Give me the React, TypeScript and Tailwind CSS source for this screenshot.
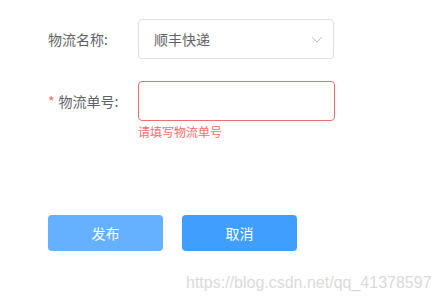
export default function App() {
  return (
    <div
      className="w-[438px] h-[302px] bg-white relative overflow-hidden"
      style={{ fontFamily: '"Noto Sans CJK SC", "Liberation Sans", sans-serif' }}
    >
      <div className="pl-[48px] pt-[19px]">
        {/* 物流名称 */}
        <div className="flex items-center h-[40px]">
          <label className="w-[90px] text-[14px] text-[#606266]">物流名称:</label>
          <div className="w-[196px] h-[40px] border border-[#dcdfe6] rounded-[4px] flex items-center justify-between pl-[15px] pr-[10px]">
            <span className="text-[14px] text-[#606266]">顺丰快递</span>
            <svg width="12" height="7" viewBox="0 0 12 7" fill="none">
              <path d="M1 1l5 5 5-5" stroke="#c0c4cc" strokeWidth="1" />
            </svg>
          </div>
        </div>

        {/* 物流单号 */}
        <div className="flex items-start mt-[22px]">
          <label className="w-[90px] h-[40px] flex items-center text-[14px] text-[#606266]">
            <span className="text-[#f56c6c] mr-[4px]">*</span>
            物流单号:
          </label>
          <div>
            <div className="w-[197px] h-[40px] border border-[#f56c6c] rounded-[4px]" />
            <div className="text-[12px] leading-none text-[#f56c6c] pt-[5px]">请填写物流单号</div>
          </div>
        </div>

        {/* buttons */}
        <div className="flex gap-[19px] mt-[77px]">
          <button className="w-[115px] h-[36px] rounded-[4px] bg-[#66b1ff] text-white text-[14px]">发布</button>
          <button className="w-[115px] h-[36px] rounded-[4px] bg-[#409eff] text-white text-[14px]">取消</button>
        </div>
      </div>

      <div
        className="absolute left-[186px] top-[271px] text-[16px] text-[#dadada]"
        style={{ fontFamily: '"Liberation Sans", Arial, sans-serif' }}
      >
        https://blog.csdn.net/qq_41378597
      </div>
    </div>
  );
}
